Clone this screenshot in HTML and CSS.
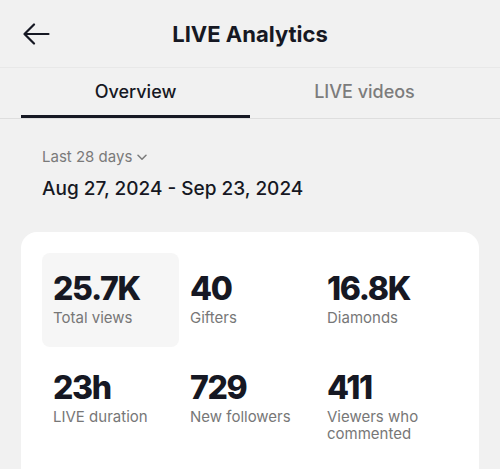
FILE: index.html
```html
<!DOCTYPE html>
<html lang="en">
<head>
    <meta charset="UTF-8">
    <meta name="viewport" content="width=device-width, initial-scale=1.0">
    <title>LIVE Analytics</title>
    <link rel="stylesheet" href="styles.css">
</head>
<body>
    <div class="page">
        <div class="top-bar">
            <button class="back" aria-label="Back">
                <svg width="28" height="22" viewBox="0 0 28 22">
                    <path d="M2.5 11H26.5M12 1.5L2.5 11L12 20.5" fill="none" stroke="#161823" stroke-width="2.2" stroke-linecap="round" stroke-linejoin="round"/>
                </svg>
            </button>
            <h1>LIVE Analytics</h1>
            <span></span>
        </div>

        <div class="tabs">
            <div class="tab active">Overview</div>
            <div class="tab">LIVE videos</div>
        </div>

        <div class="range">
            <div class="range-select">
                Last 28 days
                <svg width="10" height="7" viewBox="0 0 10 7">
                    <path d="M1 1.3L5 5.3L9 1.3" fill="none" stroke="#7a7a7a" stroke-width="1.5" stroke-linecap="round" stroke-linejoin="round"/>
                </svg>
            </div>
            <div class="range-dates">Aug 27, 2024 - Sep 23, 2024</div>
        </div>

        <div class="card">
            <div class="stats">
                <div class="stat selected">
                    <div class="value">25.7K</div>
                    <div class="label">Total views</div>
                </div>
                <div class="stat">
                    <div class="value">40</div>
                    <div class="label">Gifters</div>
                </div>
                <div class="stat">
                    <div class="value">16.8K</div>
                    <div class="label">Diamonds</div>
                </div>
                <div class="stat">
                    <div class="value">23h</div>
                    <div class="label">LIVE duration</div>
                </div>
                <div class="stat">
                    <div class="value">729</div>
                    <div class="label">New followers</div>
                </div>
                <div class="stat">
                    <div class="value">411</div>
                    <div class="label">Viewers who commented</div>
                </div>
            </div>
        </div>
    </div>
</body>
</html>
```

FILE: styles.css
```css
* {
    box-sizing: border-box;
}

body {
    margin: 0;
    font-family: Inter, "Noto Sans", Arial, sans-serif;
    background-color: #f1f1f1;
    color: #161823;
    height: 469px;
    overflow: hidden;
}

.top-bar {
    height: 68px;
    display: grid;
    grid-template-columns: 1fr auto 1fr;
    align-items: center;
    padding: 0 21px;
    border-bottom: 1px solid #e8e8e8;
}

.back {
    background: none;
    border: none;
    padding: 0;
    margin-left: 1px;
    width: 28px;
    height: 22px;
    display: flex;
    justify-self: start;
}

.top-bar h1 {
    margin: 0;
    font-size: 22px;
    font-weight: 700;
    line-height: 28px;
    padding-top: 1px;
}

.tabs {
    display: grid;
    grid-template-columns: 1fr 1fr;
    padding: 0 21px;
    border-bottom: 1px solid #dedede;
}

.tab {
    text-align: center;
    font-size: 18px;
    font-weight: 500;
    line-height: 22px;
    padding: 13px 0 12px;
    color: #7c7c7c;
    border-bottom: 3px solid transparent;
}

.tab.active {
    color: #161823;
    border-bottom-color: #161823;
}

.range {
    padding: 29px 42px 31px;
}

.range-select {
    display: flex;
    align-items: center;
    gap: 5px;
    font-size: 15px;
    line-height: 18px;
    color: #7a7a7a;
}

.range-dates {
    margin-top: 11px;
    font-size: 19px;
    font-weight: 500;
    line-height: 24px;
}

.card {
    background: #ffffff;
    border-radius: 16px;
    margin: 0 21px;
    padding: 21px 21px 40px;
    min-height: 260px;
}

.stats {
    display: grid;
    grid-template-columns: repeat(3, 137px);
    row-gap: 5px;
}

.stat {
    padding: 18px 11px 21px;
    border-radius: 8px;
}

.stat.selected {
    background: #f6f6f6;
}

.value {
    font-size: 32px;
    font-weight: 800;
    line-height: 36px;
    letter-spacing: -1.3px;
}

.label {
    margin-top: 2px;
    font-size: 15px;
    line-height: 17px;
    color: #777777;
}
```
